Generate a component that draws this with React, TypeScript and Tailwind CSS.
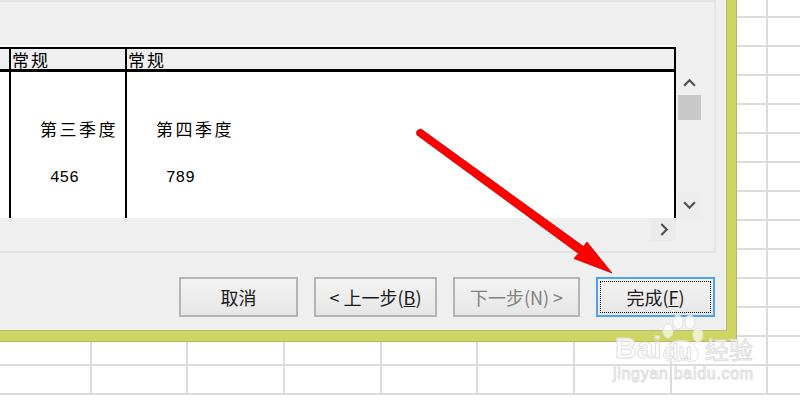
const cols = Array.from({ length: 9 });
const rows = Array.from({ length: 14 });

const Sheet = () => (
  <div className="absolute inset-0 grid grid-cols-[repeat(9,96.67px)] grid-rows-[18px_repeat(13,29px)] -ml-[5px] bg-white">
    {rows.map((_, r) =>
      cols.map((_, c) => <div key={`${r}-${c}`} className="border-r-2 border-b-2 border-[#dcdcdc]" />)
    )}
  </div>
);

const Chevron = ({ d, className }: { d: string; className: string }) => (
  <svg viewBox="0 0 12 12" className={className} fill="none" stroke="#505050" strokeWidth="2">
    <path d={d} />
  </svg>
);

const WizardButton = ({ label, hot, rest, width, disabled, active }: { label: string; hot?: string; rest?: string; width: string; disabled?: boolean; active?: boolean }) => (
  <button
    className={`${width} h-10 flex items-center justify-center text-[18px] bg-gradient-to-b from-[#f3f3f3] to-[#e6e6e6] border-2 ${active ? "border-[#4aa3ee] p-[2px]" : "border-[#b4b4b4]"} ${disabled ? "text-[#808080]" : "text-[#1a1a1a]"}`}
  >
    <span className={`w-full h-full flex items-center justify-center whitespace-pre ${active ? "border border-dotted border-black" : ""}`}>
      {label}
      {hot && (
        <>
          (<span className="underline">{hot}</span>)
        </>
      )}
      {rest}
    </span>
  </button>
);

const Preview = () => (
  <div className="flex h-[171px] w-[676px] text-black shadow-[0_-2px_0_#fbfbfb]">
    <div className="flex-1 flex flex-col">
      <div className="flex h-[25px] border-t-2 border-b-[3px] border-black border-r-2 bg-[#efefef]">
        <div className="w-[11px] border-r-2 border-black" />
        <div className="w-[116px] border-r-2 border-black pl-px text-[17px] leading-[22px] tracking-[2px]">常规</div>
        <div className="flex-1 pl-px text-[17px] leading-[22px] tracking-[2px]">常规</div>
      </div>
      <div className="flex flex-1 bg-white border-r-2 border-black">
        <div className="w-[11px] border-r-2 border-black" />
        <div className="w-[116px] border-r-2 border-black pl-[29px] pt-[45px]">
          <div className="text-[17px] leading-[24px] tracking-[2.5px] whitespace-nowrap">第三季度</div>
          <div className="pl-[10px] mt-[25px] text-[16px] leading-[24px] font-['Liberation_Mono',monospace]">456</div>
        </div>
        <div className="flex-1 pl-[29px] pt-[45px]">
          <div className="text-[17px] leading-[24px] tracking-[2.5px]">第四季度</div>
          <div className="pl-[10px] mt-[25px] text-[16px] leading-[24px] font-['Liberation_Mono',monospace]">789</div>
        </div>
      </div>
    </div>
  </div>
);

const Scrollbar = () => (
  <div className="w-[23px] h-[171px] ml-[2px] flex flex-col">
    <div className="h-[48px] flex items-center justify-center pt-[24px] pb-[1px]">
      <Chevron d="M1 9 L6 4 L11 9" className="w-[13px] h-[13px]" />
    </div>
    <div className="h-[25px] bg-[#c8c8c8]" />
    <div className="flex-1" />
    <div className="h-[26px] bg-[#ededed] flex items-center justify-center">
      <Chevron d="M1 3 L6 8 L11 3" className="w-[13px] h-[13px]" />
    </div>
  </div>
);

const Arrow = () => (
  <svg className="absolute inset-0 pointer-events-none" width="800" height="400" viewBox="0 0 800 400">
    <path
      d="M417 135 Q415 130 421 129 L583.5 246.5 L587 242 L612 273 L574 258.5 L578.5 253.5 Z"
      fill="#ff0000"
      stroke="#c00000"
      strokeWidth="0.8"
      strokeLinejoin="round"
    />
  </svg>
);

const Watermark = () => (
  <div className="absolute left-[613px] top-[314px] w-[150px] h-[72px] text-white/80 font-['Liberation_Sans',sans-serif] [-webkit-text-stroke:1px_#dedede]">
    <svg className="absolute left-[46px] top-0" width="46" height="62" viewBox="0 0 46 62" fill="#ffffff" fillOpacity="0.65" stroke="#e2e2e2" strokeWidth="1">
      <ellipse cx="9" cy="17" rx="5" ry="7" />
      <ellipse cx="19" cy="8" rx="5" ry="7" />
      <ellipse cx="31" cy="8" rx="5" ry="7" />
      <ellipse cx="39" cy="21" rx="5" ry="7" />
      <path d="M5 38 C8 24 32 22 38 36 C44 50 28 48 23 46 C16 48 2 50 5 38Z" />
    </svg>
    <div className="absolute left-[2px] top-[17px] text-[30px] leading-[34px] font-bold">Bai</div>
    <div className="absolute left-[52px] top-[21px] text-[22px] leading-[34px] font-bold">du</div>
    <div className="absolute left-[92px] top-[18px] text-[24px] leading-[34px] whitespace-nowrap font-['Noto_Sans_CJK_SC',sans-serif]">经验</div>
    <div className="absolute left-0 top-[50px] text-[16px] leading-[20px] tracking-[0.7px] whitespace-nowrap">jingyan.baidu.com</div>
  </div>
);

export default function App() {
  return (
    <div className="relative w-[800px] h-[400px] overflow-hidden bg-white font-['Noto_Sans_CJK_SC',sans-serif]">
      <Sheet />
      {/* dialog window, only its lower right corner is in shot */}
      <div className="absolute left-0 top-0 w-[737px] h-[342px] bg-[#cfd562] border-r-[1px] border-b-[1px] border-[#b3b56a]">
        <div className="w-[727px] h-[331px] bg-[#efefef] flex flex-col border-r border-b border-[#b8ba78]">
          <div className="h-[253px] w-[716px] border-t-2 border-r-2 border-b-2 border-[#e4e4e4] pt-[45px]">
            <div className="flex">
              <Preview />
              <Scrollbar />
            </div>
            <div className="w-[676px] flex justify-end">
              <div className="w-[25px] h-[23px] bg-[#ebebeb] flex items-center justify-center">
                <Chevron d="M4 1 L9 6 L4 11" className="w-[13px] h-[13px]" />
              </div>
            </div>
          </div>
          <div className="flex gap-4 pl-[179px] pt-[24px]">
            <WizardButton label="取消" width="w-[119px]" />
            <WizardButton label="< 上一步" hot="B" width="w-[123px]" />
            <WizardButton label="下一步(N) >" width="w-[127px]" disabled />
            <WizardButton label="完成" hot="F" width="w-[119px]" active />
          </div>
        </div>
      </div>
      <Arrow />
      <Watermark />
    </div>
  );
}
